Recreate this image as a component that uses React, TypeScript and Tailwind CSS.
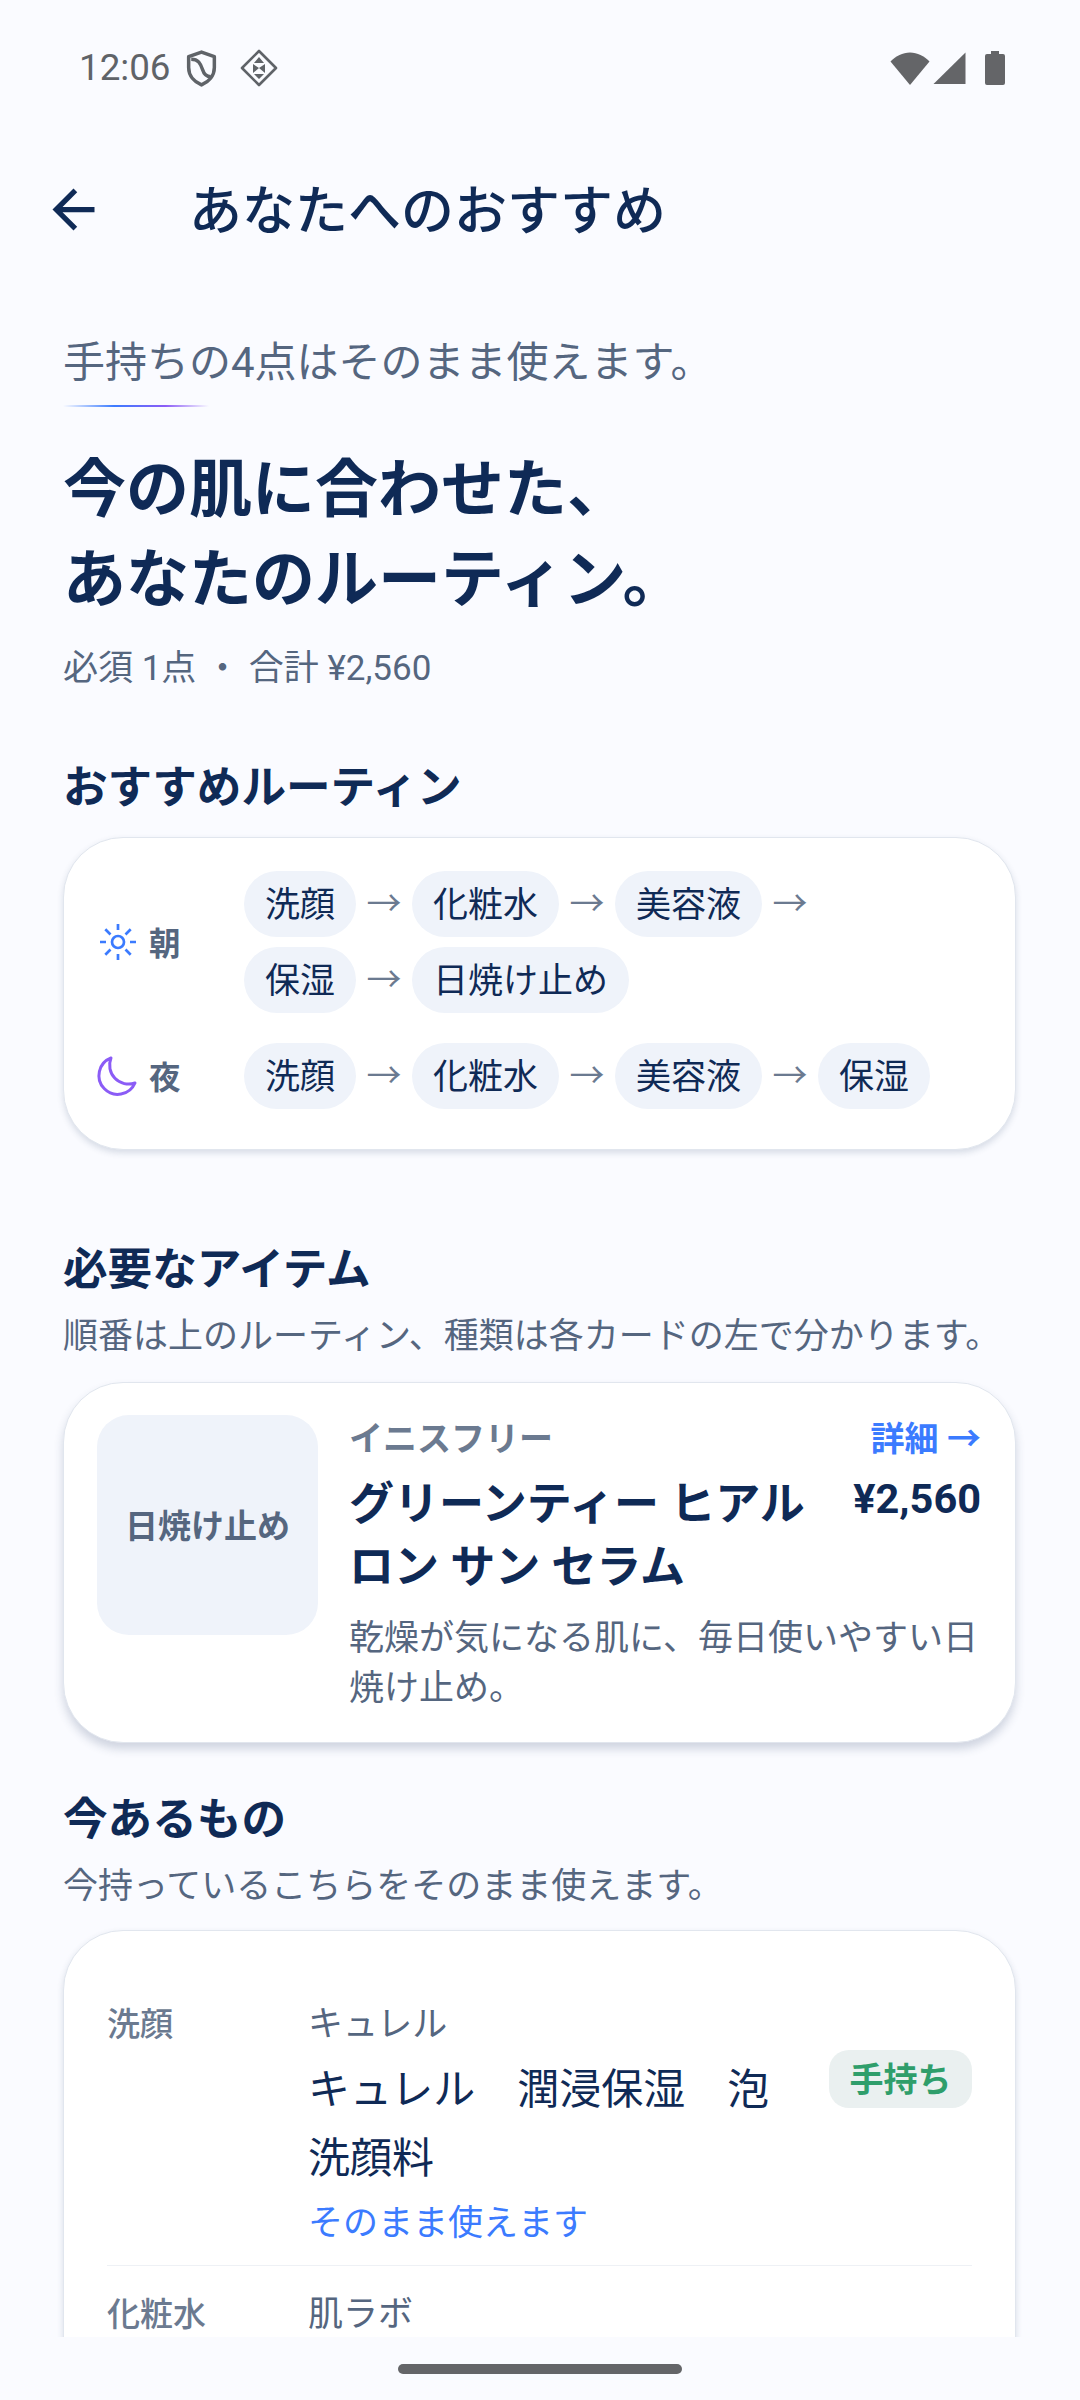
import React from "react";

const morning = ["洗顔", "化粧水", "美容液", "保湿", "日焼け止め"];
const night = ["洗顔", "化粧水", "美容液", "保湿"];

// status bar glyphs
function ShieldIcon() {
  return (
    <svg width="31" height="37" viewBox="0 0 30 36" fill="none" stroke="#5f6368" strokeWidth="3.4">
      <path d="M15 2 L27.5 6.5 V17 C27.5 25 22 31 15 34 C8 31 2.5 25 2.5 17 V6.5 Z" strokeLinejoin="round" />
      <path d="M5 9 C12 9 14 13 16 19 C17.5 24 20 26 24 26" />
    </svg>
  );
}

function DiamondIcon() {
  return (
    <svg width="38" height="38" viewBox="0 0 38 38" fill="none">
      <path d="M19 2 L36 19 L19 36 L2 19 Z" stroke="#5f6368" strokeWidth="2.6" strokeLinejoin="round" />
      <path d="M19 8 L24 14 H14 Z M13 15 L19 19 L13 24 Z M25 15 V24 L19 19 Z M14 25 H24 L19 30 Z" fill="#5f6368" />
    </svg>
  );
}

function StatusIcons() {
  return (
    <div className="flex items-center">
      <svg width="40" height="33" viewBox="0 0 40 33" fill="#646568">
        <path d="M20 33 L0.5 9.5 C6 4 12.5 0.5 20 0.5 C27.5 0.5 34 4 39.5 9.5 Z" />
      </svg>
      <svg className="ml-[3px]" width="33" height="32" viewBox="0 0 33 32" fill="#646568">
        <path d="M32.5 0.5 V32 H0.5 Z" />
      </svg>
      <svg className="ml-[19px]" width="20" height="34" viewBox="0 0 20 34" fill="#646568">
        <path d="M6 0 H14 V3 H18 A2 2 0 0 1 20 5 V32 A2 2 0 0 1 18 34 H2 A2 2 0 0 1 0 32 V5 A2 2 0 0 1 2 3 H6 Z" />
      </svg>
    </div>
  );
}

function SunIcon() {
  return (
    <svg width="38" height="38" viewBox="0 0 38 38" fill="none" stroke="#3b7bff" strokeWidth="2.7">
      <circle cx="19" cy="19" r="6" />
      <path d="M19 1 V7 M19 31 V37 M1 19 H7 M31 19 H37 M6.3 6.3 L11.5 11.5 M26.5 26.5 L31.7 31.7 M31.7 6.3 L26.5 11.5 M11.5 26.5 L6.3 31.7" />
    </svg>
  );
}

function MoonIcon() {
  return (
    <svg className="-ml-[6px]" width="48" height="48" viewBox="0 0 24 24" fill="none" stroke="#8b5cf6" strokeWidth="1.5" strokeLinejoin="round">
      <path d="M9 3A9.5 9.5 0 0 0 21 15.5A9.4 9.4 0 1 1 9 3Z" />
    </svg>
  );
}

function Chip({ label }: { label: string }) {
  return (
    <span className="flex h-[66px] items-center rounded-full bg-[#eff3fa] px-[21px] pt-[4px] text-[35px] text-[#0f2a56]">
      {label}
    </span>
  );
}

function Flow({ items }: { items: string[] }) {
  return (
    <div className="flex flex-1 flex-wrap gap-y-[10px] pr-[48px]">
      {items.map((item, index) => (
        <div key={index} className="flex items-center">
          <Chip label={item} />
          {index < items.length - 1 && (
            <span className="mx-[10.5px] text-[35px] leading-none text-[#6b7a90]">→</span>
          )}
        </div>
      ))}
    </div>
  );
}

export default function App() {
  return (
    <div
      lang="ja"
      className="flex h-[2400px] w-[1080px] flex-col overflow-hidden bg-[#fafbff] font-['Roboto','Noto_Sans_CJK_JP',sans-serif] text-[#0f2a56]"
    >
      {/* status bar */}
      <div className="flex h-[136px] shrink-0 items-center justify-between pl-[79px] pr-[75px]">
        <div className="flex items-center">
          <span className="text-[36.75px] text-[#5f6368]">12:06</span>
          <span className="ml-[15px]"><ShieldIcon /></span>
          <span className="ml-[23px]"><DiamondIcon /></span>
        </div>
        <StatusIcons />
      </div>

      {/* app bar */}
      <div className="flex h-[147px] shrink-0 items-center pl-[42px]">
        <svg width="63" height="63" viewBox="0 0 24 24" fill="#0f2a56">
          <path d="M20 11H7.83l5.59-5.59L12 4l-8 8 8 8 1.41-1.41L7.83 13H20v-2z" />
        </svg>
        <h1 className="ml-[84px] pt-[5px] text-[53px] font-medium leading-none">あなたへのおすすめ</h1>
      </div>

      {/* scroll area */}
      <div className="min-h-0 flex-1 overflow-hidden pl-[63px] pr-[64px] pt-[50px]">
        <p className="text-[42px] leading-[60px] text-[#55667f]">手持ちの4点はそのまま使えます。</p>
        <div className="mt-[12px] h-[2px] w-[146px] bg-[linear-gradient(90deg,transparent,#3b7bff_35%,#8b5cf6_70%,transparent)]" />

        <h2 className="mt-[38px] text-[63px] font-bold leading-[90px]">
          今の肌に合わせた、
          <br />
          あなたのルーティン。
        </h2>
        <p className="mt-[19px] text-[35px] leading-[50px] text-[#55667f]">必須 1点 ・ 合計 ¥2,560</p>

        <h3 className="mt-[64px] text-[44.6px] font-bold leading-[60px]">おすすめルーティン</h3>
        <div className="mt-[19px] rounded-[60px] border border-[#e1e6ee] bg-white pb-[40px] pl-[35px] pt-[33px] shadow-[0_3px_6px_rgba(40,60,100,0.16)]">
          <div className="flex items-center">
            <div className="flex w-[145px] shrink-0 items-center">
              <SunIcon />
              <span className="ml-[12px] pt-[5px] text-[31.5px] font-semibold text-[#55667f]">朝</span>
            </div>
            <Flow items={morning} />
          </div>
          <div className="mt-[30px] flex items-center">
            <div className="flex w-[145px] shrink-0 items-center">
              <MoonIcon />
              <span className="ml-[8px] pt-[5px] text-[31.5px] font-semibold text-[#55667f]">夜</span>
            </div>
            <Flow items={night} />
          </div>
        </div>

        <h3 className="mt-[88px] pt-[2px] text-[44.6px] font-bold leading-[60px]">必要なアイテム</h3>
        <p className="mt-[12px] text-[35px] leading-[50px] text-[#55667f]">
          順番は上のルーティン、種類は各カードの左で分かります。
        </p>
        <div className="mt-[20px] flex rounded-[60px] border border-[#e1e6ee] bg-white pb-[28px] pl-[33px] pr-[34px] pt-[32px] shadow-[0_6px_10px_rgba(40,60,100,0.2)]">
          <div className="flex h-[220px] w-[221px] shrink-0 items-center justify-center rounded-[32px] bg-[#eff3fa] pt-[4px] text-[33px] font-semibold text-[#55667f]">
            日焼け止め
          </div>
          <div className="ml-[31px] min-w-0 flex-1">
            <div className="flex items-center justify-between pt-[4px]">
              <span className="text-[34px] font-semibold leading-[40px] text-[#6b7a90]">イニスフリー</span>
              <span className="text-[34px] font-semibold leading-[40px] text-[#3b7bff]">詳細 →</span>
            </div>
            <div className="mt-[14px] flex gap-[16px]">
              <div className="min-w-0 flex-1 text-[45px] font-bold leading-[63px]">
                グリーンティー ヒアルロン サン セラム
              </div>
              <div className="-mt-[3px] shrink-0 text-[41.5px] font-bold leading-[58px]">¥2,560</div>
            </div>
            <p className="mt-[15px] text-[35px] leading-[50px] text-[#55667f]">
              乾燥が気になる肌に、毎日使いやすい日焼け止め。
            </p>
          </div>
        </div>

        <h3 className="mt-[46px] pt-[1px] text-[44.6px] font-bold leading-[60px]">今あるもの</h3>
        <p className="mt-[12px] text-[35px] leading-[50px] text-[#55667f]">今持っているこちらをそのまま使えます。</p>
        <div className="mt-[18px] rounded-t-[60px] border border-[#e1e6ee] bg-white px-[43px] pb-[60px] pt-[73px] shadow-[0_3px_6px_rgba(40,60,100,0.16)]">
          <div className="flex border-b border-[#eef1f5] pb-[20px]">
            <div className="w-[201px] shrink-0 text-[33px] font-medium leading-[42px] text-[#6b7a90]">洗顔</div>
            <div className="min-w-0 flex-1">
              <div className="text-[35px] leading-[42px] text-[#55667f]">キュレル</div>
              <div className="mt-[9px] text-[42px] leading-[69px]">キュレル　潤浸保湿　泡洗顔料</div>
              <div className="mt-[10px] text-[35px] leading-[42px] text-[#3b7bff]">そのまま使えます</div>
            </div>
            <span className="ml-[30px] mt-[46px] flex h-[58px] w-[143px] shrink-0 items-center justify-center rounded-[20px] bg-[#eaf0f0] pt-[3px] text-[34px] font-semibold text-[#2f9e6b]">
              手持ち
            </span>
          </div>
          <div className="flex pt-[28px]">
            <div className="w-[201px] shrink-0 text-[33px] font-medium leading-[42px] text-[#6b7a90]">化粧水</div>
            <div className="text-[35px] leading-[42px] text-[#55667f]">肌ラボ</div>
          </div>
        </div>
      </div>

      {/* gesture bar */}
      <div className="relative z-10 flex h-[63px] shrink-0 items-start justify-center bg-[#fafbff] pt-[27px]">
        <div className="h-[10px] w-[284px] rounded-full bg-[#646568]" />
      </div>
    </div>
  );
}
